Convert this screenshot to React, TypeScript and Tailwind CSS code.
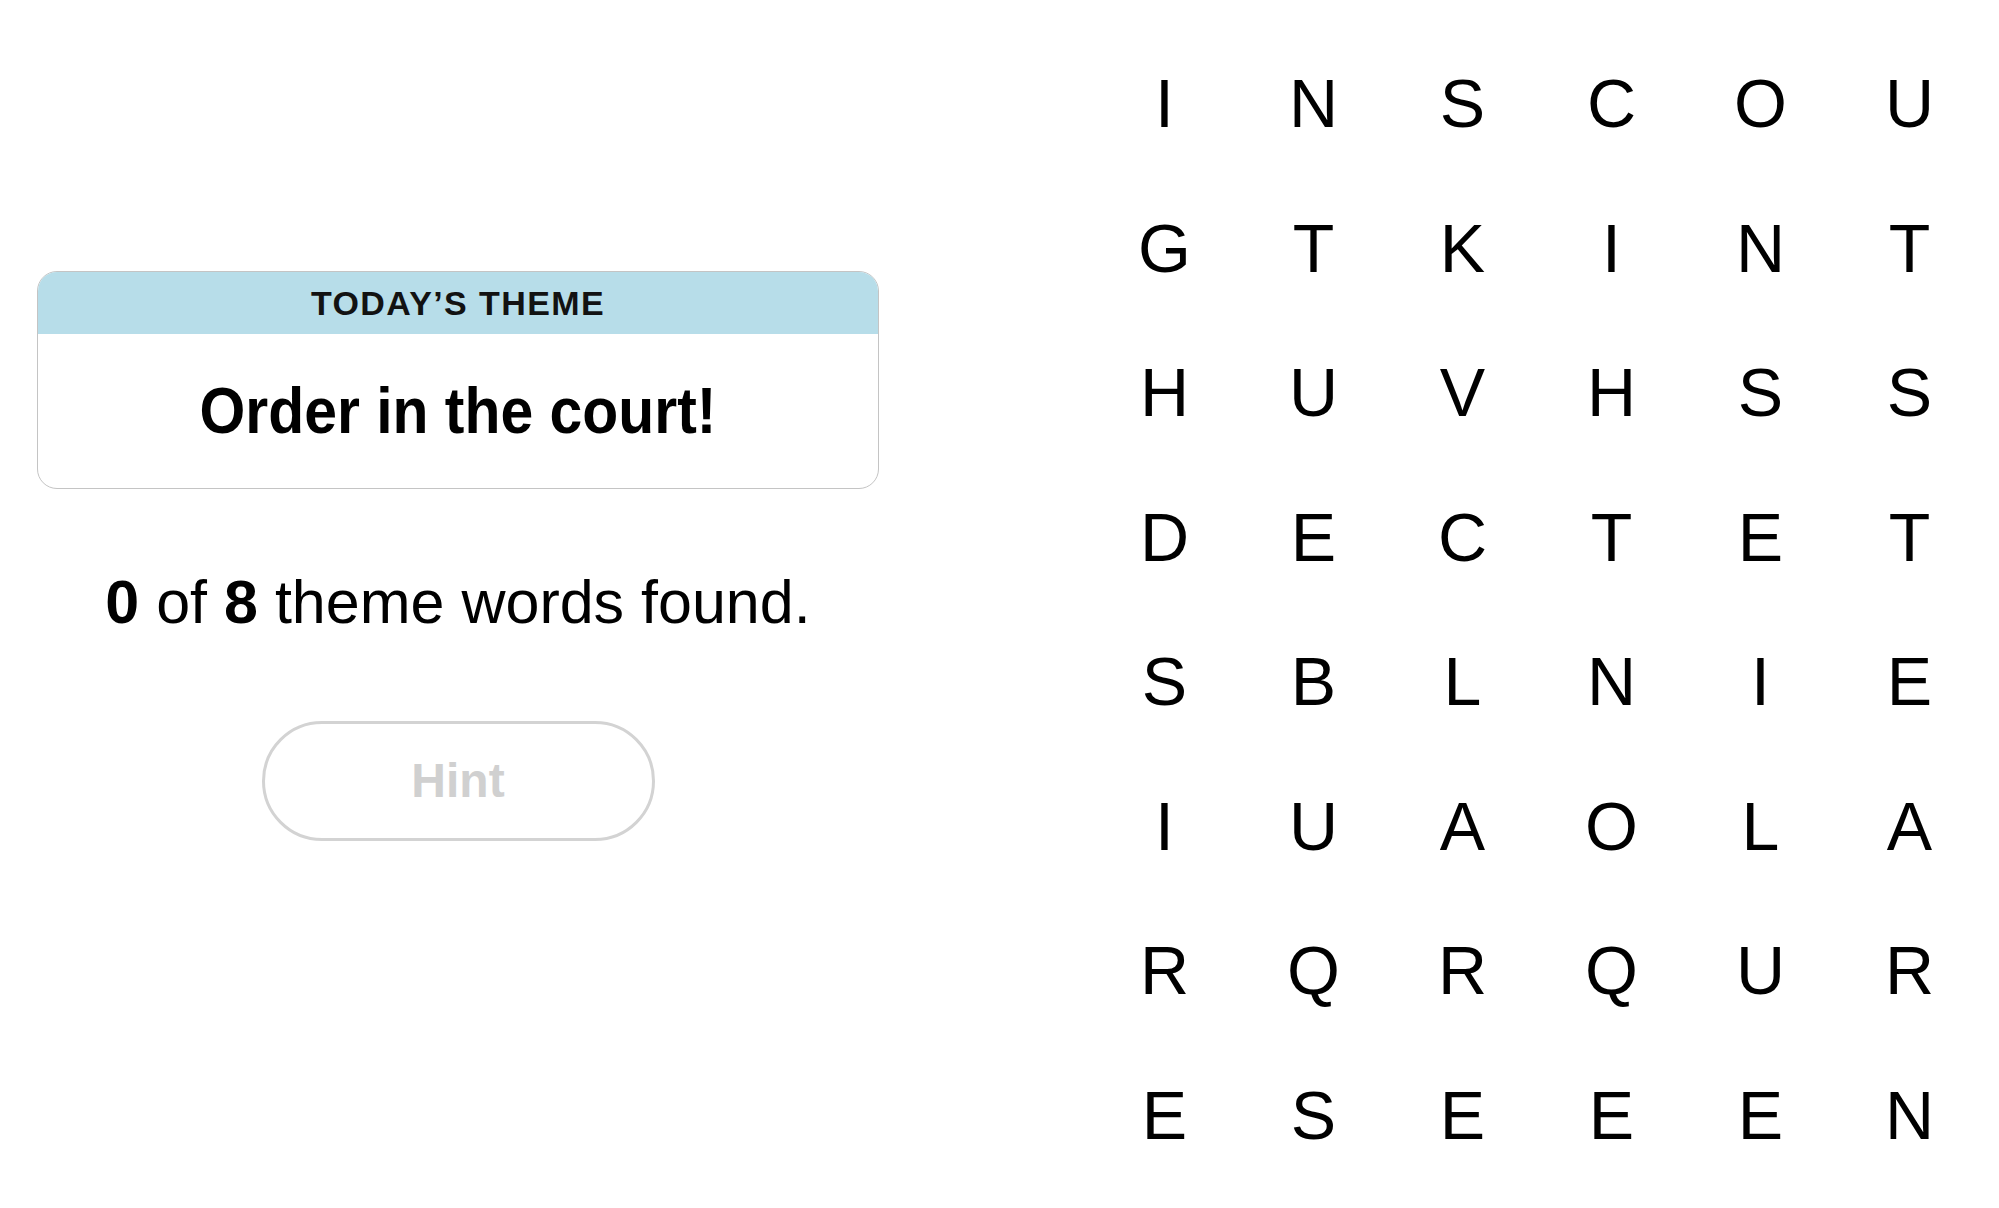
const GRID = [
  "INSCOU",
  "GTKINT",
  "HUVHSS",
  "DECTET",
  "SBLNIE",
  "IUAOLA",
  "RQRQUR",
  "ESEEEN",
];

function ThemeCard() {
  return (
    <div className="w-full overflow-hidden rounded-[20px] border-[1.5px] border-[#c4c4c4] bg-white">
      <div className="flex h-[62px] items-center justify-center bg-[#b7dde9]">
        <span className="text-[34px] font-bold tracking-[1.4px] text-[#121212]">TODAY’S THEME</span>
      </div>
      <div className="flex h-[154px] items-center justify-center">
        <span className="inline-block scale-x-[0.92] text-[64px] font-bold text-black">Order in the court!</span>
      </div>
    </div>
  );
}

export default function App() {
  return (
    <div className="flex h-[1208px] w-[1999px] bg-white font-['Liberation_Sans',Arial,sans-serif] text-black">
      <div className="flex w-[916px] shrink-0 flex-col items-center px-[37px] pt-[271px]">
        <ThemeCard />
        <p className="mt-[78px] text-[61px] leading-[70px]">
          <b>0</b> of <b>8</b> theme words found.
        </p>
        <button className="mt-[84px] flex h-[120px] w-[393px] items-center justify-center rounded-full border-[3px] border-[#d3d3d3] text-[48px] font-bold text-[#d0d0d0]">
          Hint
        </button>
      </div>

      <div className="ml-[174px] grid grid-cols-[repeat(6,149px)] auto-rows-[144.5px] pt-[31px]">
        {GRID.flatMap((row, r) =>
          row.split("").map((ch, c) => (
            <div key={`${r}-${c}`} className="flex items-center justify-center text-[68px] leading-none">
              {ch}
            </div>
          ))
        )}
      </div>
    </div>
  );
}
